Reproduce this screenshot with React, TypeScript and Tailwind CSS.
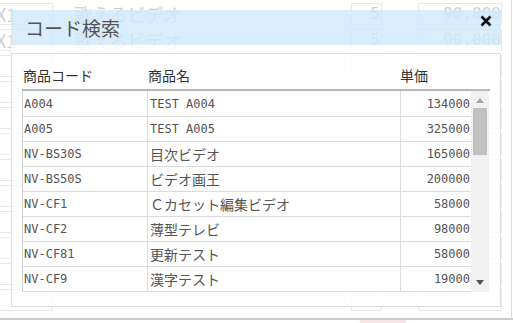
import React from "react";

const rows: [string, string, string][] = [
  ["A004", "TEST A004", "134000"],
  ["A005", "TEST A005", "325000"],
  ["NV-BS30S", "目次ビデオ", "165000"],
  ["NV-BS50S", "ビデオ画王", "200000"],
  ["NV-CF1", "Ｃカセット編集ビデオ", "58000"],
  ["NV-CF2", "薄型テレビ", "98000"],
  ["NV-CF81", "更新テスト", "58000"],
  ["NV-CF9", "漢字テスト", "19000"],
];

const mono = { fontFamily: '"DejaVu Sans Mono", "Noto Sans CJK JP", monospace' };
const jp = { fontFamily: '"Noto Sans CJK JP", "Noto Sans", sans-serif' };

function BgRow({ withText }: { withText: boolean }) {
  return (
    <div className="flex h-[26px] shrink-0 items-center">
      <div className="ml-[-2px] flex h-[22px] w-[55px] items-center border border-[#e8e8e8] text-[18px] text-[#d0d0d0]" style={jp}>
        {withText ? <span className="ml-[-3px]">X1</span> : null}
      </div>
      <div className="ml-[21px] w-[277px] text-[18px] leading-[22px] text-[#d0d0d0]" style={jp}>
        {withText ? "歌えるビデオ" : ""}
      </div>
      <div className="flex h-[22px] w-[31px] items-center justify-end border border-[#e8e8e8] pr-[1px] text-[16px] text-[#d0d0d0]" style={mono}>
        {withText ? "5" : ""}
      </div>
      <div className="ml-[36px] flex h-[22px] w-[84px] items-center justify-end border border-[#e8e8e8] text-[16px] text-[#d0d0d0]" style={mono}>
        {withText ? "90,000" : ""}
      </div>
    </div>
  );
}

export default function App() {
  return (
    <div className="relative h-[323px] w-[513px] overflow-hidden bg-white">
      {/* background page */}
      <div className="flex h-[318px] w-[512px] flex-col overflow-hidden border-r border-[#dddddd] pt-[1px]">
        <BgRow withText />
        <BgRow withText />
        {Array.from({ length: 10 }).map((_, i) => (
          <BgRow key={i} withText={false} />
        ))}
      </div>
      <div className="h-[2px] w-full bg-[#cccccc]" />
      <div className="flex h-[3px] w-full">
        <div className="ml-[360px] h-[3px] w-[46px] bg-[#f6e4e6]" />
      </div>

      {/* dialog */}
      <div className="absolute left-[11px] top-[10px] flex w-[490px] flex-col">
        <div className="flex h-[35px] items-start justify-between bg-[#cfe8fb]/80 pl-[14px] pr-[9px]">
          <span className="mt-[5px] text-[19px] leading-[25px] text-[#555555]" style={jp}>
            コード検索
          </span>
          <svg className="mt-[5px]" width="12" height="12" viewBox="0 0 12 12">
            <path d="M1.5 1.5 L10.5 10.5 M10.5 1.5 L1.5 10.5" stroke="#111111" strokeWidth="2.6" strokeLinecap="butt" />
          </svg>
        </div>
        <div className="h-[8px] bg-white/85" />
        <div className="flex h-[254px] flex-col border border-[#dddddd] bg-white/85 px-[10px]">
          <div className="flex h-[35px] shrink-0 pt-[10px] text-[14px] leading-[22px] text-[#333333]" style={jp}>
            <div className="w-[125px] pl-[1px]">商品コード</div>
            <div className="w-[253px] pl-[1px]">商品名</div>
            <div className="pl-[0px]">単価</div>
          </div>
          <div className="flex h-[203px] border-t-2 border-[#b8b8b8]">
            <div className="flex w-[449px] flex-col border-l border-[#d0d0d0] bg-white">
              {rows.map(([code, name, price], i) => {
                const isJp = /[^\x00-\x7f]/.test(name);
                return (
                  <div
                    key={code}
                    className={`flex shrink-0 border-b border-[#dcdcdc] text-[#555555] ${i === 0 ? "h-[26px]" : "h-[25px]"}`}
                  >
                    <div className="flex w-[125px] items-center border-r border-[#dcdcdc] pl-[1px] text-[12px]" style={mono}>
                      {code}
                    </div>
                    <div
                      className={`flex w-[253px] items-center border-r border-[#dcdcdc] pl-[2px] ${isJp ? "text-[14px]" : "text-[12px]"}`}
                      style={isJp ? jp : mono}
                    >
                      {name}
                    </div>
                    <div className="flex w-[70px] items-center justify-end pr-[1px] text-[12px]" style={mono}>
                      {price}
                    </div>
                  </div>
                );
              })}
            </div>
            <div className="relative flex h-[201px] w-[18px] flex-col items-center bg-[#f1f1f1]">
              <svg className="mt-[7px]" width="8" height="5" viewBox="0 0 8 5">
                <path d="M0 5 L4 0 L8 5 Z" fill="#a3a3a3" />
              </svg>
              <div className="mt-[5px] h-[47px] w-[14px] bg-[#c1c1c1]" />
              <div className="flex-1" />
              <svg className="mb-[7px]" width="8" height="5" viewBox="0 0 8 5">
                <path d="M0 0 L8 0 L4 5 Z" fill="#505050" />
              </svg>
            </div>
          </div>
        </div>
      </div>
    </div>
  );
}
